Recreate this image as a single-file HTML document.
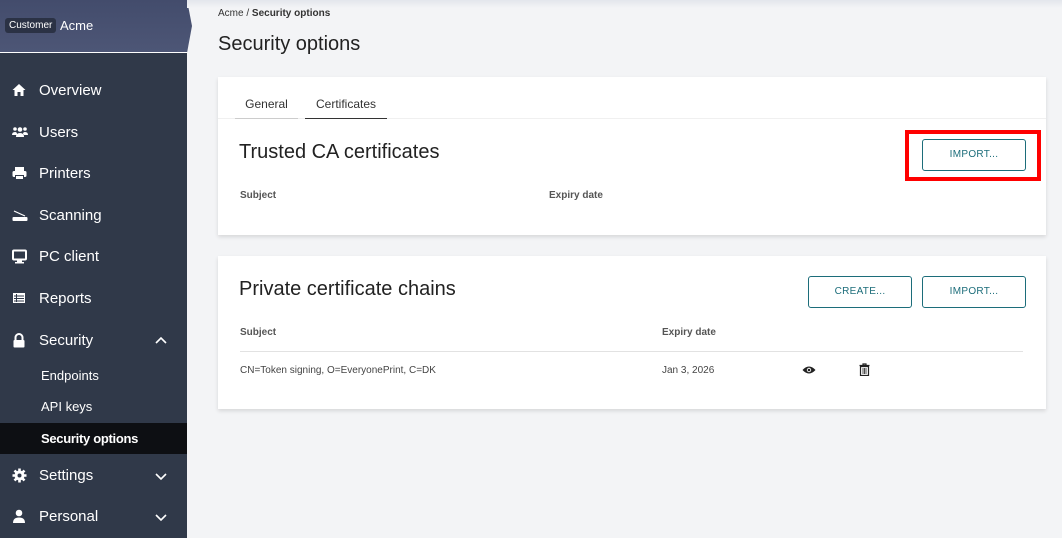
<!DOCTYPE html>
<html><head><meta charset="utf-8"><style>
*{box-sizing:border-box;margin:0;padding:0}
body{width:1062px;height:538px;overflow:hidden;background:#f3f4f6;font-family:"Liberation Sans",sans-serif;position:relative}
.side{position:absolute;left:0;top:0;width:187px;height:538px;background:#303949}
.head{position:absolute;left:0;top:0;width:192px;height:53px;background:linear-gradient(#434c6c,#4d5676);clip-path:polygon(0 0,187px 0,192px 26px,187px 53px,0 53px);border-bottom:1px solid #fff}
.badge{position:absolute;left:5px;top:18px;background:#2b3245;color:#fff;font-size:10px;padding:2px 4px;border-radius:3px}
.acme{position:absolute;left:60px;top:18px;color:#fff;font-size:13px}
.nav{position:absolute;left:0;width:187px;height:30px;color:#fff;font-size:15px;line-height:30px}
.nav svg{position:absolute;left:12px;top:7px}
.nav span{position:absolute;left:39px}
.nav .ch{position:absolute;left:155px;top:9px}
.sub{position:absolute;left:0;width:187px;height:31px;line-height:31px;color:#fff;font-size:13px;padding-left:41px}
.shadow{position:absolute;left:187px;top:0;right:0;height:8px;background:linear-gradient(#e3e6ec,#f3f4f6)}
.card{position:absolute;left:218px;width:828px;background:#fff;box-shadow:0 2px 4px rgba(0,0,0,.12)}
.btn{position:absolute;height:32px;border:1px solid #1c6d7a;border-radius:3px;color:#1c6d7a;font-size:10px;text-align:center;line-height:30px;letter-spacing:.3px}
.th{position:absolute;font-size:10px;font-weight:bold;color:#555}
</style></head><body>
<div class="side"></div>
<div class="head"></div>
<div class="badge">Customer</div><div class="acme">Acme</div>
<div class="shadow"></div>

<div class="nav" style="top:76px"><svg width="14" height="14" viewBox="0 0 14 14"><path d="M7 1L0.5 7H2.5V13H5.5V9H8.5V13H11.5V7H13.5Z" fill="#fff"/></svg><span>Overview</span></div>
<div class="nav" style="top:118px"><svg width="16" height="14" viewBox="0 0 16 14"><circle cx="3" cy="4" r="1.8" fill="#fff"/><circle cx="13" cy="4" r="1.8" fill="#fff"/><circle cx="8" cy="4.5" r="2.3" fill="#fff"/><path d="M0 10Q0 7 3 7Q5 7 5 9V10ZM16 10Q16 7 13 7Q11 7 11 9V10ZM4 12Q4 8 8 8Q12 8 12 12Z" fill="#fff"/></svg><span>Users</span></div>
<div class="nav" style="top:159px"><svg width="15" height="15" viewBox="0 0 15 15"><rect x="3" y="1" width="9" height="4" fill="#fff"/><rect x="0.5" y="5" width="14" height="6" rx="1.5" fill="#fff"/><rect x="3" y="9" width="9" height="5" fill="#303949"/><rect x="4" y="10" width="7" height="3" fill="#fff"/></svg><span>Printers</span></div>
<div class="nav" style="top:201px"><svg width="16" height="15" viewBox="0 0 16 15"><path d="M2 3L13 8" stroke="#fff" stroke-width="1.2"/><rect x="0.5" y="9" width="15" height="4" rx="1" fill="#fff"/></svg><span>Scanning</span></div>
<div class="nav" style="top:242px"><svg width="15" height="15" viewBox="0 0 15 15"><rect x="1" y="1.5" width="13" height="9" rx="1" fill="none" stroke="#fff" stroke-width="2"/><rect x="5" y="11" width="5" height="2" fill="#fff"/><rect x="3" y="13" width="9" height="1.5" fill="#fff"/></svg><span>PC client</span></div>
<div class="nav" style="top:284px"><svg width="14" height="14" viewBox="0 0 14 14"><rect x="1" y="2" width="12" height="10" fill="#fff"/><path d="M2 5H12M2 7.5H12M2 10H12M4.5 3V11" stroke="#303949" stroke-width="1"/></svg><span>Reports</span></div>
<div class="nav" style="top:326px"><svg width="14" height="15" viewBox="0 0 14 15"><path d="M3.5 7V4.5A3.5 3.5 0 0 1 10.5 4.5V7" fill="none" stroke="#fff" stroke-width="2"/><rect x="1.5" y="7" width="11" height="7.5" rx="1" fill="#fff"/></svg><span>Security</span><svg class="ch" width="12" height="12" viewBox="0 0 12 12"><path d="M1 8L6 3L11 8" fill="none" stroke="#fff" stroke-width="1.6"/></svg></div>
<div class="sub" style="top:360px">Endpoints</div>
<div class="sub" style="top:391px">API keys</div>
<div class="sub" style="top:423px;background:#0d0f13;font-weight:bold;letter-spacing:-.3px">Security options</div>
<div class="nav" style="top:461px"><svg width="15" height="15" viewBox="0 0 15 15"><circle cx="7.5" cy="7.5" r="5" fill="#fff"/><path d="M7.5 0.5V14.5M0.5 7.5H14.5M2.5 2.5L12.5 12.5M12.5 2.5L2.5 12.5" stroke="#fff" stroke-width="2.6"/><circle cx="7.5" cy="7.5" r="2" fill="#303949"/></svg><span>Settings</span><svg class="ch" width="12" height="12" viewBox="0 0 12 12"><path d="M1 4L6 9L11 4" fill="none" stroke="#fff" stroke-width="1.6"/></svg></div>
<div class="nav" style="top:502px"><svg width="14" height="15" viewBox="0 0 14 15"><circle cx="7" cy="4" r="3.3" fill="#fff"/><path d="M1 14Q1 8.5 7 8.5Q13 8.5 13 14Z" fill="#fff"/></svg><span>Personal</span><svg class="ch" width="12" height="12" viewBox="0 0 12 12"><path d="M1 4L6 9L11 4" fill="none" stroke="#fff" stroke-width="1.6"/></svg></div>

<div style="position:absolute;left:218px;top:8px;font-size:10px;color:#333">Acme / <b>Security options</b></div>
<div style="position:absolute;left:218px;top:33px;font-size:20px;color:#222">Security options</div>

<div class="card" style="top:77px;height:158px">
  <div style="position:absolute;left:0;right:0;top:41px;height:1px;background:#f0f0f0"></div>
  <div style="position:absolute;left:17px;top:20px;width:63px;height:22px;border-bottom:1px solid #ccc;font-size:12px;color:#333;text-align:center">General</div>
  <div style="position:absolute;left:87px;top:20px;width:82px;height:22px;border-bottom:1px solid #333;font-size:12px;color:#333;text-align:center">Certificates</div>
  <div style="position:absolute;left:21px;top:64px;font-size:20px;color:#222">Trusted CA certificates</div>
  <div class="th" style="left:22px;top:113px">Subject</div>
  <div class="th" style="left:331px;top:113px">Expiry date</div>
  <div class="btn" style="left:704px;top:62px;width:104px">IMPORT...</div>
</div>
<div style="position:absolute;left:905px;top:130px;width:136px;height:51px;border:4px solid #f00"></div>

<div class="card" style="top:256px;height:153px">
  <div style="position:absolute;left:21px;top:22px;font-size:20px;color:#222">Private certificate chains</div>
  <div class="btn" style="left:590px;top:20px;width:104px">CREATE...</div>
  <div class="btn" style="left:704px;top:20px;width:104px">IMPORT...</div>
  <div class="th" style="left:22px;top:71px">Subject</div>
  <div class="th" style="left:444px;top:71px">Expiry date</div>
  <div style="position:absolute;left:22px;right:23px;top:95px;height:1px;background:#e2e2e2"></div>
  <div style="position:absolute;left:22px;top:109px;font-size:10px;color:#444">CN=Token signing, O=EveryonePrint, C=DK</div>
  <div style="position:absolute;left:444px;top:109px;font-size:10px;color:#444">Jan 3, 2026</div>
  <svg style="position:absolute;left:584px;top:109px" width="14" height="10" viewBox="0 0 14 10"><path d="M0.5 5Q7 -2 13.5 5Q7 12 0.5 5Z" fill="#222"/><circle cx="7" cy="5" r="2.2" fill="#fff"/><circle cx="7" cy="5" r="1.3" fill="#222"/></svg>
  <svg style="position:absolute;left:641px;top:107px" width="11" height="13" viewBox="0 0 11 13"><path d="M0.5 2.5H10.5M4 2.5V1H7V2.5" fill="none" stroke="#222" stroke-width="1.2"/><path d="M1.5 3.5H9.5V12.5H1.5Z" fill="none" stroke="#222" stroke-width="1.2"/><path d="M4 5V11M5.5 5V11M7 5V11" stroke="#222" stroke-width="0.8"/></svg>
</div>
</body></html>
